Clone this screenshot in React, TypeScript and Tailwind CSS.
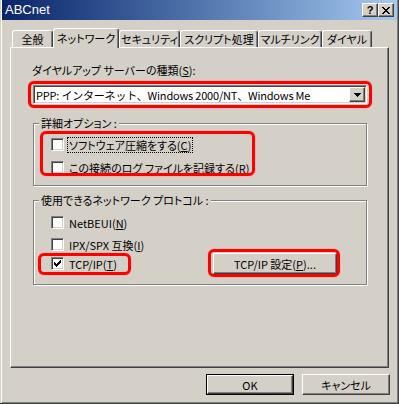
import React from "react";

const raised =
  "border border-t-white border-l-white border-r-[#404040] border-b-[#404040] shadow-[inset_-1px_-1px_0_#808080]";
const sunken =
  "border border-t-[#808080] border-l-[#808080] border-r-white border-b-white shadow-[inset_1px_1px_0_#404040,inset_-1px_-1px_0_#d4d0c8]";
const red =
  "absolute pointer-events-none border-[3px] border-[#ff0000] rounded-[6px] shadow-[0_0_1px_#ff3030]";

const tabs = [
  { label: "全般", w: "w-[41px]" },
  { label: "ネットワーク", w: "w-[66px]", active: true },
  { label: "セキュリティ", w: "w-[61px]" },
  { label: "スクリプト処理", w: "w-[78px]" },
  { label: "マルチリンク", w: "w-[64px]" },
  { label: "ダイヤル", w: "w-[50px]" },
];

function CheckMark() {
  // 7x7 pixel check, 3 px tall per column
  const cols = [2, 3, 4, 3, 2, 1, 0];
  return (
    <svg width="7" height="7" viewBox="0 0 7 7" shapeRendering="crispEdges">
      {cols.map((y, x) => (
        <rect key={x} x={x} y={y} width="1" height="3" fill="#000" />
      ))}
    </svg>
  );
}

function Box({ checked }: { checked?: boolean }) {
  return (
    <span
      className={`w-[13px] h-[13px] shrink-0 bg-white flex items-center justify-center ${sunken}`}
    >
      {checked && <CheckMark />}
    </span>
  );
}

function CheckRow({
  children,
  checked,
  focus,
}: {
  children: React.ReactNode;
  checked?: boolean;
  focus?: boolean;
}) {
  return (
    <div className="flex items-center gap-[3px] h-[13px]">
      <Box checked={checked} />
      <span
        className={`px-[1px] leading-[14px] whitespace-nowrap border ${
          focus ? "border-dotted border-black" : "border-transparent"
        }`}
      >
        {children}
      </span>
    </div>
  );
}

export default function App() {
  return (
    <div className="w-[399px] h-[404px] bg-[#d4d0c8] border-r border-b border-[#404040] text-[11px] text-black font-['Noto_Sans_CJK_JP','Noto_Sans',sans-serif] [font-feature-settings:'palt']">
      <div className="ml-px h-full flex flex-col border-l border-l-white border-r border-r-[#808080] border-b border-b-[#808080]">
        {/* title bar */}
        <div className="h-[20px] shrink-0 flex items-center pl-[3px] pr-[3px] bg-gradient-to-r from-[#0a246a] to-[#a6caf0]">
          <span className="text-white text-[13px] leading-[20px] font-['Liberation_Sans',sans-serif]">
            ABCnet
          </span>
          <div className="ml-auto flex">
            <span
              className={`w-[16px] h-[14px] bg-[#d4d0c8] flex items-center justify-center text-[11px] leading-none font-bold font-['Liberation_Sans',sans-serif] ${raised}`}
            >
              ?
            </span>
            <span
              className={`w-[16px] h-[14px] bg-[#d4d0c8] flex items-center justify-center ${raised}`}
            >
              <svg width="8" height="7" viewBox="0 0 8 7" shapeRendering="crispEdges">
                <path d="M0 0h2v1H0zM6 0h2v1H6zM1 1h2v1H1zM5 1h2v1H5zM2 2h4v1H2zM3 3h2v1H3zM2 4h4v1H2zM1 5h2v1H1zM5 5h2v1H5zM0 6h2v1H0zM6 6h2v1H6z" fill="#000" />
              </svg>
            </span>
          </div>
        </div>

        {/* tabs */}
        <div className="relative z-10 mt-[8px] h-[19px] flex items-end pl-[10px]">
          {tabs.map((t) =>
            t.active ? (
              <div
                key={t.label}
                className={`${t.w} h-[20px] -mb-px bg-[#d4d0c8] rounded-t-[3px] border-t border-l border-t-white border-l-white border-r border-r-[#404040] shadow-[inset_-1px_0_0_#808080] flex justify-center pt-[2px] leading-[14px] whitespace-nowrap`}
              >
                {t.label}
              </div>
            ) : (
              <div
                key={t.label}
                className={`${t.w} h-[17px] rounded-t-[3px] border-t border-l border-t-white border-l-white border-r border-r-[#404040] shadow-[inset_-1px_0_0_#808080] flex justify-center pt-[1px] leading-[14px] whitespace-nowrap`}
              >
                {t.label}
              </div>
            )
          )}
        </div>

        {/* panel */}
        <div className={`ml-[8px] w-[379px] h-[321px] shrink-0 pt-[15px] pl-[21px] ${raised}`}>
          <div className="h-[14px] leading-[14px] whitespace-nowrap">
            ダイヤルアップ サーバーの種類(<u>S</u>):
          </div>

          <div className={`relative mt-[8px] ml-[1px] w-[334px] h-[19px] p-[1px] bg-white flex items-center ${sunken}`}>
            <span className="pl-[1px] leading-[14px] whitespace-nowrap tracking-[-0.2px] [font-feature-settings:normal]">
              PPP: インターネット、Windows 2000/NT、Windows Me
            </span>
            <span className={`ml-auto w-[16px] h-[15px] bg-[#d4d0c8] flex items-center justify-center ${raised}`}>
              <svg width="7" height="4" viewBox="0 0 7 4" shapeRendering="crispEdges">
                <path d="M0 0h7v1H0zM1 1h5v1H1zM2 2h3v1H2zM3 3h1v1H3z" fill="#000" />
              </svg>
            </span>
            <span className={`${red} left-[-6px] right-[-6px] top-[-5px] bottom-[-5px]`} />
          </div>

          <fieldset className="mt-[13px] ml-[1px] w-[334px] border border-[#808080] shadow-[1px_1px_0_#fff,inset_1px_1px_0_#fff] pl-[5px] pb-[11px]">
            <legend className="px-[2px] leading-[12px] bg-[#d4d0c8] whitespace-nowrap">詳細オプション :</legend>
            <div className="relative mt-[9px] ml-[12px] flex flex-col gap-[10px]">
              <CheckRow focus>
                ソフトウェア圧縮をする(<u>C</u>)
              </CheckRow>
              <CheckRow>
                この接続のログ ファイルを記録する(<u>R</u>)
              </CheckRow>
              <span className={`${red} left-[-11px] top-[-7px] w-[215px] h-[45px]`} />
            </div>
          </fieldset>

          <fieldset className="mt-[8px] ml-[1px] w-[334px] border border-[#808080] shadow-[1px_1px_0_#fff,inset_1px_1px_0_#fff] pl-[5px] pr-[29px] pb-[10px]">
            <legend className="px-[2px] leading-[12px] bg-[#d4d0c8] whitespace-nowrap">
              使用できるネットワーク プロトコル :
            </legend>
            <div className="mt-[10px] ml-[12px] flex flex-col">
              <CheckRow>
                NetBEUI(<u>N</u>)
              </CheckRow>
              <div className="mt-[9px]">
                <CheckRow>
                  IPX/SPX 互換(<u>I</u>)
                </CheckRow>
              </div>
              <div className="mt-[2px] h-[21px] flex items-center">
                <div className="relative">
                  <CheckRow checked>
                    TCP/IP(<u>T</u>)
                  </CheckRow>
                  <span className={`${red} left-[-13px] top-[-4px] w-[93px] h-[22px]`} />
                </div>
                <div className="relative ml-auto">
                  <div className={`w-[124px] h-[21px] flex items-center justify-center leading-[14px] whitespace-nowrap ${raised}`}>
                    TCP/IP 設定(<u>P</u>)...
                  </div>
                  <span className={`${red} left-[-5px] right-[-3px] top-[-4px] bottom-[-3px]`} />
                </div>
              </div>
            </div>
          </fieldset>
        </div>

        {/* dialog buttons */}
        <div className="mt-[6px] flex justify-end gap-[8px] pr-[7px]">
          <div className="w-[88px] h-[21px] border border-black">
            <div className={`h-full flex items-center justify-center leading-[14px] ${raised}`}>OK</div>
          </div>
          <div className={`w-[88px] h-[21px] flex items-center justify-center leading-[14px] ${raised}`}>
            キャンセル
          </div>
        </div>
      </div>
    </div>
  );
}
